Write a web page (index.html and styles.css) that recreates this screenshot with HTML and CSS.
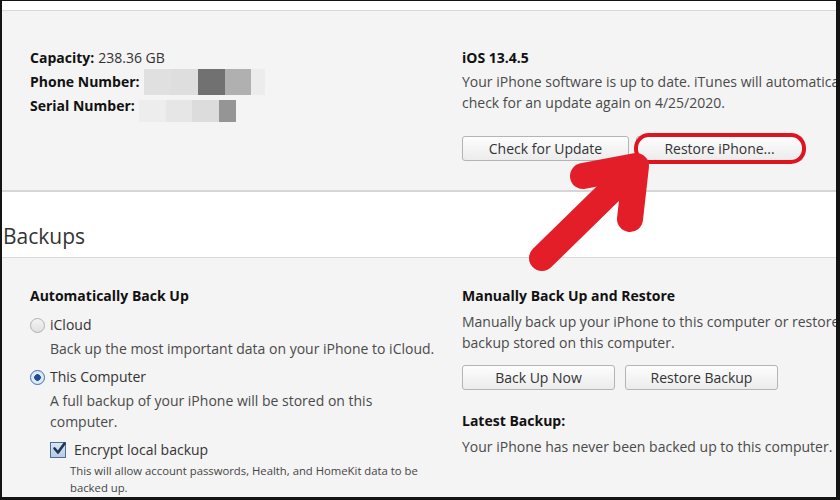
FILE: index.html
```html
<!DOCTYPE html>
<html>
<head>
<meta charset="utf-8">
<link rel="stylesheet" href="styles.css">
</head>
<body>
<div class="page">
  <div class="top-band"></div>
  <section class="panel device">
    <div class="col">
      <div class="row"><b>Capacity:</b> <span class="val">238.36 GB</span></div>
      <div class="row"><b>Phone Number:</b><span class="blur phone"><i style="width:27px;background:#e0e0e0"></i><i style="width:27px;background:#dedede"></i><i style="width:27px;background:#717171"></i><i style="width:26px;background:#b0b0b0"></i><i style="width:14px;background:#ececec"></i></span></div>
      <div class="row"><b>Serial Number:</b><span class="blur serial"><i style="width:27px;background:#ededed"></i><i style="width:26px;background:#e6e6e6"></i><i style="width:27px;background:#dcdcdc"></i><i style="width:17px;background:#959595"></i></span></div>
    </div>
    <div class="col">
      <div class="row"><b>iOS 13.4.5</b></div>
      <p class="desc nowrap">Your iPhone software is up to date. iTunes will automatically<br>check for an update again on 4/25/2020.</p>
      <div class="buttons top-buttons">
        <button class="btn">Check for Update</button>
        <button class="btn highlighted">Restore iPhone...</button>
      </div>
    </div>
  </section>
  <h2 class="section-title">Backups</h2>
  <section class="panel backups">
    <div class="col">
      <div class="row"><b>Automatically Back Up</b></div>
      <div class="row option"><span class="radio"></span>iCloud</div>
      <p class="desc indent">Back up the most important data on your iPhone to iCloud.</p>
      <div class="row option second"><span class="radio checked"></span>This Computer</div>
      <p class="desc indent">A full backup of your iPhone will be stored on this<br>computer.</p>
      <div class="row option encrypt"><span class="checkbox"><svg viewBox="0 0 16 16" width="16" height="16"><path d="M3.5 7.5 L7 11.5 L13.5 2.5" fill="none" stroke="#1d3556" stroke-width="2.6" stroke-linecap="round" stroke-linejoin="round"/></svg></span>Encrypt local backup</div>
      <p class="small">This will allow account passwords, Health, and HomeKit data to be<br>backed up.</p>
    </div>
    <div class="col">
      <div class="row"><b>Manually Back Up and Restore</b></div>
      <p class="desc tight nowrap">Manually back up your iPhone to this computer or restore a<br>backup stored on this computer.</p>
      <div class="buttons mid-buttons">
        <button class="btn wide">Back Up Now</button>
        <button class="btn wide">Restore Backup</button>
      </div>
      <div class="row latest"><b>Latest Backup:</b></div>
      <p class="desc after-latest nowrap">Your iPhone has never been backed up to this computer.</p>
    </div>
  </section>
  <svg class="arrow" width="840" height="500" viewBox="0 0 840 500">
    <g fill="none" stroke="#e31e28" stroke-width="26" stroke-linecap="round" stroke-linejoin="round">
      <path d="M542 258 L630 172"/>
      <path d="M583 176 L636 166 L630 219"/>
    </g>
  </svg>
</div>
</body>
</html>
```
FILE: styles.css
```css
html, body {
  margin: 0;
  padding: 0;
  background: #ffffff;
  overflow: hidden;
}
body {
  width: 840px;
  height: 500px;
  font-family: "Open Sans", "Noto Sans", sans-serif;
  font-size: 14px;
  color: #444;
}
.page {
  position: relative;
  width: 840px;
  height: 500px;
  overflow: hidden;
}
.page::after {
  content: "";
  position: absolute;
  inset: 0;
  border-style: solid;
  border-color: #141414;
  border-width: 1px 4px 3px 2px;
  pointer-events: none;
}
.top-band {
  height: 10px;
  background: #fff;
}
.panel {
  display: grid;
  grid-template-columns: 432px 420px;
  padding-left: 30px;
  background: #f4f4f4;
  border-top: 1px solid #d9d9d9;
  box-sizing: border-box;
}
.device {
  height: 182px;
  padding-top: 35px;
  border-bottom: 2px solid #d6d6d6;
}
.backups {
  height: 243px;
  padding-top: 26px;
}
.row {
  height: 24px;
  line-height: 24px;
  display: flex;
  align-items: center;
  white-space: nowrap;
}
.row b {
  color: #111;
  font-weight: 700;
}
.val {
  margin-left: 4px;
  color: #333;
}
.blur {
  display: inline-flex;
  margin-left: 4px;
}
.blur i {
  display: block;
}
.phone i { height: 26px; }
.serial { margin-top: 10px; }
.serial i { height: 22px; }
.desc {
  margin: 1px 0 0 0;
  line-height: 21px;
  color: #4a4a4a;
}
.nowrap { white-space: nowrap; }
.indent { margin-left: 20px; }
.tight { margin-top: 3px; line-height: 21px; }
.buttons {
  display: flex;
  gap: 7px;
}
.top-buttons { margin-top: 23px; }
.mid-buttons { margin-top: 12px; gap: 10px; }
.btn {
  position: relative;
  width: 167px;
  height: 25px;
  padding: 0;
  font-family: inherit;
  font-size: 14px;
  color: #333;
  background: linear-gradient(#fdfdfd, #ececec);
  border: 1px solid #b4b4b4;
  border-radius: 3px;
}
.btn.wide { width: 153px; height: 25px; }
.highlighted::after {
  content: "";
  position: absolute;
  left: -3px;
  top: -4px;
  right: -4px;
  bottom: -4px;
  border: 4px solid #e0141e;
  border-radius: 15px;
}
.section-title {
  margin: 0;
  height: 65px;
  box-sizing: border-box;
  padding: 30px 0 0 3px;
  font-size: 21px;
  font-weight: 400;
  line-height: 28px;
  color: #333;
}
.option {
  color: #333;
  margin-top: 5px;
}
.option.second { margin-top: 6px; }
.encrypt { margin-top: 6px; margin-left: 20px; }
.radio {
  width: 13px;
  height: 13px;
  border: 1px solid #b0b0b0;
  border-radius: 50%;
  background: linear-gradient(#f4f4f4, #e0e0e0);
  margin-right: 5px;
  box-sizing: content-box;
  display: inline-flex;
}
.radio.checked {
  border-color: #3d6fae;
  background: radial-gradient(circle, #1c4f93 0 3px, #dfe9f5 3.6px);
}
.checkbox {
  width: 14px;
  height: 14px;
  border: 1px solid #4c6f9a;
  background: linear-gradient(#d9e6f4, #b7cbe3);
  margin-right: 8px;
  display: inline-flex;
  position: relative;
}
.checkbox svg {
  position: absolute;
  left: 0;
  top: -2px;
}
.small {
  margin: 0 0 0 40px;
  font-size: 11.3px;
  line-height: 17px;
  color: #444;
}
.latest { margin-top: 19px; }
.after-latest { margin-top: 3px; }
.arrow {
  position: absolute;
  left: 0;
  top: 0;
  pointer-events: none;
}
```
